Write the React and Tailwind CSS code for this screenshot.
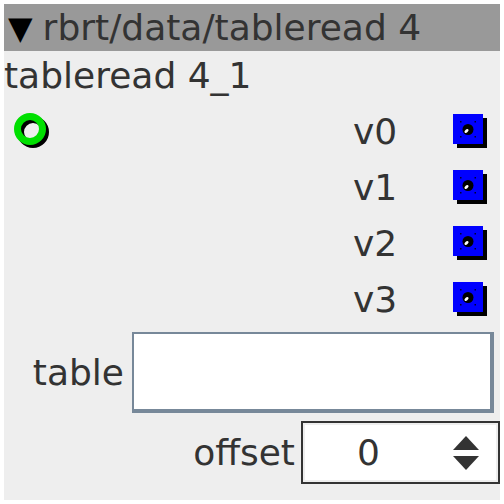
const font = { fontFamily: '"DejaVu Sans", sans-serif' };

function Inlet() {
  return (
    <svg width="40" height="40" viewBox="0 0 40 40">
      <circle cx="19" cy="19" r="12.5" fill="none" stroke="#000" strokeWidth="7" />
      <circle cx="16" cy="16" r="12.5" fill="none" stroke="#00e000" strokeWidth="7" />
    </svg>
  );
}

function Outlet() {
  return (
    <svg width="36" height="36" viewBox="0 0 36 36">
      <rect x="4" y="4" width="30" height="30" fill="#000" />
      <rect x="0" y="0" width="30" height="30" fill="#0000ff" />
      <circle cx="15" cy="15.5" r="5.5" fill="#000" />
      <ellipse cx="13.5" cy="17" rx="2.4" ry="1.5" fill="#fff" transform="rotate(-45 13.5 17)" />
      <rect x="7" y="7" width="1.5" height="1.5" fill="#003" />
      <rect x="21.5" y="7" width="1.5" height="1.5" fill="#003" />
      <rect x="7" y="22" width="1.5" height="1.5" fill="#003" />
      <rect x="21.5" y="22" width="1.5" height="1.5" fill="#003" />
    </svg>
  );
}

export default function App() {
  const outs = ['v0', 'v1', 'v2', 'v3'];
  return (
    <div className="w-[504px] h-[504px] bg-white p-[4px]" style={font}>
      <div className="w-[496px] h-[496px] bg-[#eeeeee] flex flex-col text-[#333] text-[36px] leading-none">
        <div className="h-[47px] bg-[#999999] flex items-center gap-[10px] pl-[4px]">
          <span className="text-black text-[32px]">▼</span>
          <span>rbrt/data/tableread 4</span>
        </div>
        <div className="h-[50px] flex items-center">tableread 4_1</div>
        <div className="flex flex-col mt-[3px]">
          {outs.map((o, i) => (
            <div key={o} className="h-[56px] flex items-center">
              <div className="w-[349px] pl-[10px] pt-[2px] flex items-center">{i === 0 && <Inlet />}</div>
              <span className="w-[100px]">{o}</span>
              <Outlet />
            </div>
          ))}
        </div>
        <div className="flex items-center mt-[4px] h-[81px]">
          <span className="w-[128px] pr-[8px] text-right">table</span>
          <div className="w-[362px] h-[81px] bg-white border-t-2 border-l-2 border-r-4 border-b-4 border-[#778899]" />
        </div>
        <div className="flex items-center justify-end mt-[8px] h-[63px]">
          <span className="pr-[6px]">offset</span>
          <div className="w-[199px] h-[63px] border-2 border-[#333] p-[2px] bg-[#eeeeee]">
            <div className="w-full h-full bg-white flex items-center">
              <span className="flex-1 text-center pr-[4px]">0</span>
              <div className="w-[60px] flex flex-col items-center gap-[6px]">
                <svg width="26" height="14" viewBox="0 0 26 14"><path d="M13 0 L26 14 L0 14 Z" fill="#333" /></svg>
                <svg width="26" height="14" viewBox="0 0 26 14"><path d="M0 0 L26 0 L13 14 Z" fill="#333" /></svg>
              </div>
            </div>
          </div>
        </div>
      </div>
    </div>
  );
}
